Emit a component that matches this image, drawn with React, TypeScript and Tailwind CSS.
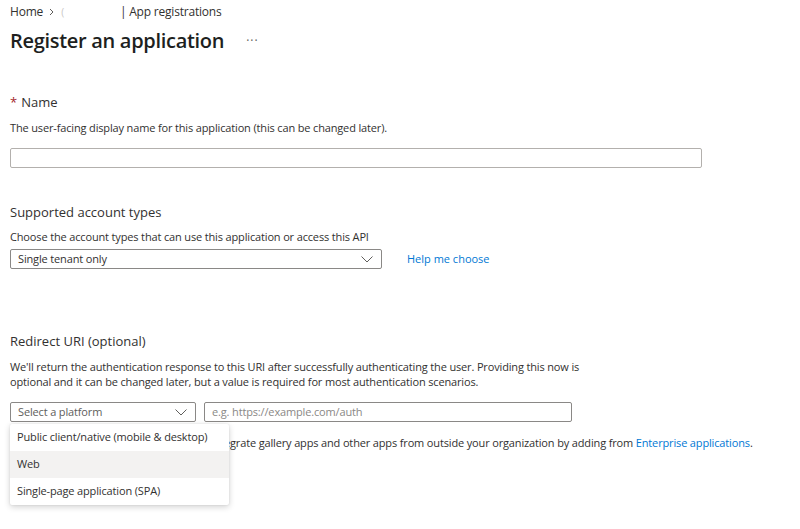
import React from "react";

const Chevron = ({ className = "" }: { className?: string }) => (
  <svg width="12" height="7" viewBox="0 0 12 7" className={className}>
    <polyline points="0.5,0.5 6,6 11.5,0.5" fill="none" stroke="#605e5c" strokeWidth="1" />
  </svg>
);

export default function App() {
  return (
    <div
      className="relative w-[800px] h-[529px] bg-white text-[#323130] overflow-hidden pl-[10px]"
      style={{ fontFamily: '"Open Sans", "Noto Sans", sans-serif' }}
    >
      {/* Breadcrumb */}
      <div className="h-[24px] flex items-center text-[12px] text-[#323130] tracking-[-0.2px]">
        <span>Home</span>
        <svg width="6" height="8" viewBox="0 0 6 8" className="ml-[6px]">
          <polyline points="1,1 4,4 1,7" fill="none" stroke="#605e5c" strokeWidth="1" />
        </svg>
        <span className="ml-[6px] text-[#c8c6c4] text-[10px]">(</span>
        <span className="ml-[56px]">| App registrations</span>
      </div>
      {/* Title */}
      <div className="h-[34px] flex items-center">
        <h1 className="text-[20px] font-semibold text-[#201f1e] tracking-[-0.3px]">Register an application</h1>
        <span className="ml-[22px] text-[12px] text-[#605e5c] tracking-[1px]">···</span>
      </div>

      {/* Name */}
      <div className="mt-[36px] h-[18px] flex items-center text-[13px]">
        <span className="text-[#a4262c] mr-[4px]">*</span>
        <span>Name</span>
      </div>
      <div className="mt-[8px] h-[16px] flex items-center text-[11px] tracking-[-0.15px]">
        The user-facing display name for this application (this can be changed later).
      </div>
      <div className="mt-[12px] w-[692px] h-[20px] border border-[#b3b0ad] rounded-[2px]" />

      {/* Supported account types */}
      <div className="mt-[36px] h-[18px] flex items-center text-[13px]">Supported account types</div>
      <div className="mt-[7px] h-[16px] flex items-center text-[11px] tracking-[-0.15px]">
        Choose the account types that can use this application or access this API
      </div>
      <div className="mt-[4px] flex items-center">
        <div className="w-[372px] h-[20px] border border-[#8a8886] rounded-[2px] flex items-center justify-between pl-[7px] pr-[8px] text-[11px] tracking-[-0.15px]">
          <span>Single tenant only</span>
          <Chevron />
        </div>
        <span className="ml-[25px] text-[11px] text-[#0078d4]">Help me choose</span>
      </div>

      {/* Redirect URI */}
      <div className="mt-[64px] h-[18px] flex items-center text-[13px]">Redirect URI (optional)</div>
      <div className="mt-[8px] w-[572px] text-[11px] leading-[15px] tracking-[-0.15px]">
        We'll return the authentication response to this URI after successfully authenticating the user. Providing this now is optional and it can be changed later, but a value is required for most authentication scenarios.
      </div>
      <div className="mt-[13px] flex items-center">
        <div className="relative">
          <div className="w-[186px] h-[20px] border border-[#8a8886] rounded-[2px] flex items-center justify-between pl-[7px] pr-[8px] text-[11px] text-[#605e5c] tracking-[-0.15px]">
            <span>Select a platform</span>
            <Chevron />
          </div>
          <div className="absolute left-0 top-[22px] w-[219px] bg-white rounded-[2px] shadow-[0_2px_6px_rgba(0,0,0,0.18),0_0_2px_rgba(0,0,0,0.1)] z-10 text-[11px] tracking-[-0.15px]">
            <div className="h-[27px] flex items-center pl-[7px]">Public client/native (mobile &amp; desktop)</div>
            <div className="h-[27px] flex items-center pl-[7px] bg-[#f3f2f1]">Web</div>
            <div className="h-[27px] flex items-center pl-[7px]">Single-page application (SPA)</div>
          </div>
        </div>
        <div className="ml-[8px] w-[368px] h-[20px] border border-[#8a8886] rounded-[2px] flex items-center pl-[7px] text-[11px] text-[#8a8886] tracking-[-0.15px]">
          e.g. https://example.com/auth
        </div>
      </div>
      <div className="mt-[13px] h-[16px] flex items-center text-[11px] whitespace-nowrap tracking-[-0.15px]">
        Register an app you're working on here. Integrate gallery apps and other apps from outside your organization by adding from&nbsp;
        <span className="text-[#0078d4]">Enterprise applications</span>.
      </div>
    </div>
  );
}
